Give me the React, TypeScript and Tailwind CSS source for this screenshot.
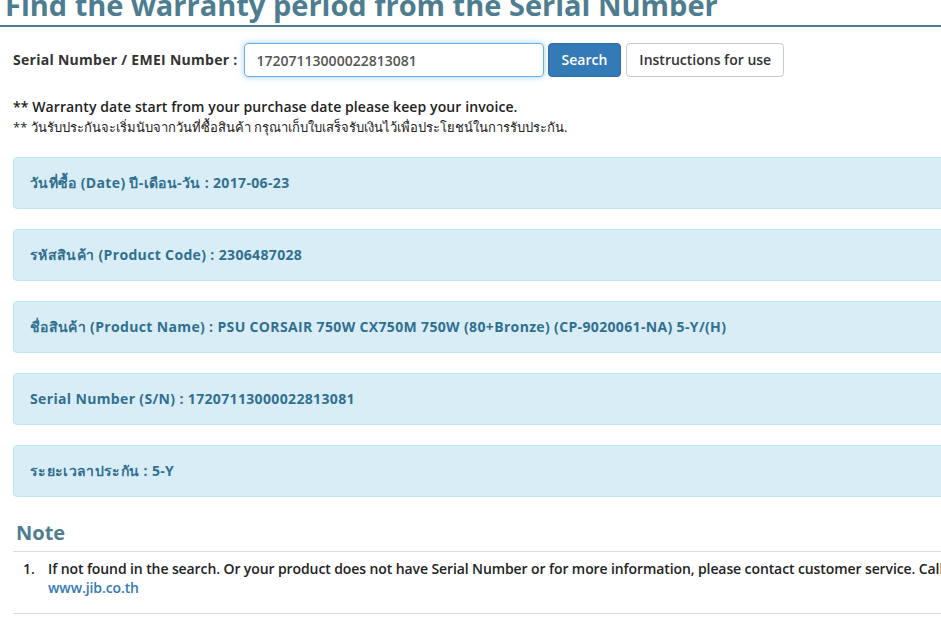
import type { ReactNode } from 'react'

const font = { fontFamily: '"Open Sans", "Noto Sans", sans-serif' }

function InfoBox({ label, value }: { label: ReactNode; value: string }) {
  return (
    <div className="h-[52px] flex items-center px-4 rounded border border-[#bce8f1] bg-[#d9edf7] text-[#31708f] text-sm font-bold tracking-[0.35px] whitespace-nowrap">
      <span>{label}</span>
      <span>&nbsp;: {value}</span>
    </div>
  )
}

export default function App() {
  return (
    <div className="w-[941px] h-[624px] overflow-hidden bg-white" style={font}>
      <div className="w-[1170px]">
        <h1 className="text-[29px] leading-[34px] font-bold text-[#4e7d90] pl-[5px] -mt-[12px] pb-[3px] border-b-2 border-[#4e7a8c]">
          Find the warranty period from the Serial Number
        </h1>

        <div className="px-[13px]">
          <div className="flex items-center mt-[16px] h-[34px]">
            <label className="text-sm font-bold text-[#333] mr-[6px] tracking-[0.28px]">Serial Number / EMEI Number :</label>
            <input
              readOnly
              value="17207113000022813081"
              className="w-[300px] h-[34px] px-3 rounded border border-[#66afe9] shadow-[0_0_6px_rgba(102,175,233,0.6)] text-sm font-semibold text-[#555] outline-none"
              style={font}
            />
            <button className="ml-[4px] h-[34px] px-[13px] rounded bg-[#337ab7] border border-[#2e6da4] text-white text-sm font-semibold">
              Search
            </button>
            <button className="ml-[5px] h-[34px] px-[12px] rounded bg-white border border-[#ccc] text-[#333] text-sm font-semibold">
              Instructions for use
            </button>
          </div>

          <p className="mt-[20px] text-sm font-semibold text-[#222] leading-5 tracking-[0.1px]">
            ** Warranty date start from your purchase date please keep your invoice.
          </p>
          <p className="text-[13px] text-[#222] leading-5">
            ** วันรับประกันจะเริ่มนับจากวันที่ซื้อสินค้า กรุณาเก็บใบเสร็จรับเงินไว้เพื่อประโยชน์ในการรับประกัน.
          </p>

          <div className="mt-[20px] flex flex-col gap-5">
            <InfoBox label="วันที่ซื้อ (Date) ปี-เดือน-วัน" value="2017-06-23" />
            <InfoBox label="รหัสสินค้า (Product Code)" value="2306487028" />
            <InfoBox label="ชื่อสินค้า (Product Name)" value="PSU CORSAIR 750W CX750M 750W (80+Bronze) (CP-9020061-NA) 5-Y/(H)" />
            <InfoBox label="Serial Number (S/N)" value="17207113000022813081" />
            <InfoBox label="ระยะเวลาประกัน" value="5-Y" />
          </div>

          <h3 className="mt-[22px] pl-[3px] text-xl font-bold text-[#4e7d90] leading-7">Note</h3>
          <div className="mt-[4px] border-t border-[#ddd] pt-[7px] pb-[16px] border-b">
            <ol className="text-sm font-semibold text-[#222] leading-[19px] tracking-[-0.1px]">
              <li className="flex">
                <span className="w-[35px] pl-[10px]">1.</span>
                <div>
                  <div className="whitespace-nowrap">
                    If not found in the search. Or your product does not have Serial Number or for more information, please contact customer service. Call 1317
                  </div>
                  <a className="text-[#337ab7]">www.jib.co.th</a>
                </div>
              </li>
            </ol>
          </div>
        </div>
      </div>
    </div>
  )
}
